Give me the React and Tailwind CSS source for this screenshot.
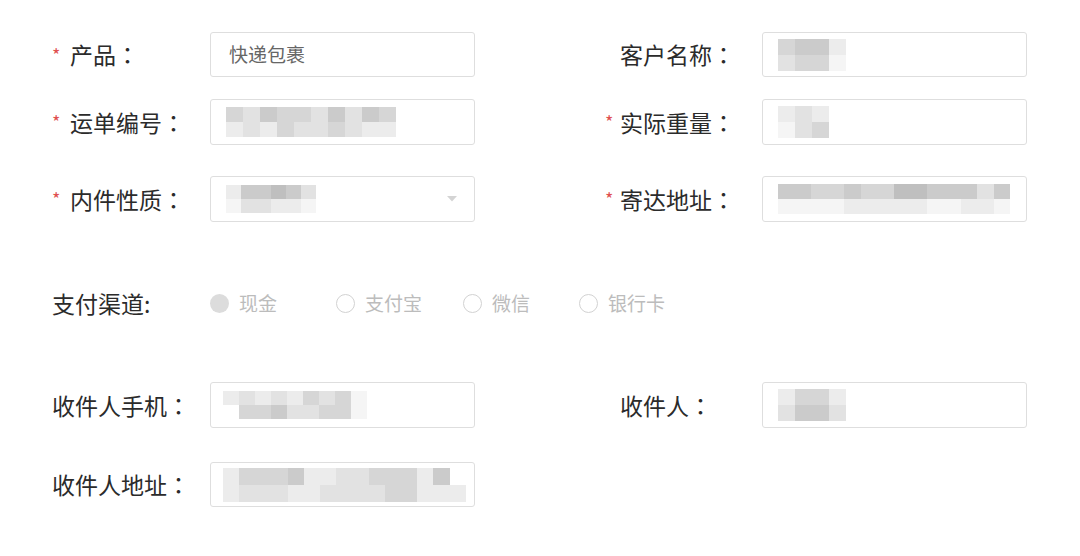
const shade = {
  a: "bg-[#bfbfbf]",
  b: "bg-[#cbcbcb]",
  c: "bg-[#d6d6d6]",
  d: "bg-[#e2e2e2]",
  e: "bg-[#ececec]",
  f: "bg-[#f5f5f5]",
  ".": "bg-transparent",
};

// pixelated (masked) value inside an input
function Masked({ rows, cw = "w-[17px]", ch = "h-[16px]" }) {
  return (
    <div className="flex flex-col blur-[0.6px]">
      {rows.map((r, i) => (
        <div key={i} className="flex">
          {[...r].map((c, j) => (
            <div key={j} className={`${cw} ${ch} ${shade[c]}`} />
          ))}
        </div>
      ))}
    </div>
  );
}

function Label({ text, required, side = "left" }) {
  const w = side === "left" ? "w-[158px]" : "w-[157px]";
  const star = side === "left" ? "w-[18px]" : "w-[15px]";
  return (
    <div className={`${w} shrink-0 flex items-center text-[23px] text-[#2b2b2b]`}>
      {required ? (
        <span className={`${star} self-start mt-[13px] text-[18px] leading-none text-[#e05050]`}>*</span>
      ) : side === "right" ? (
        <span className={star} />
      ) : null}
      <span>{text}</span>
      <span className="font-['Noto_Sans_CJK_TC']">：</span>
    </div>
  );
}

function Box({ children, select }) {
  return (
    <div className="w-[265px] h-full shrink-0 border border-[#dedede] rounded-[3px] bg-white flex items-center justify-between pl-[15px] pr-[17px]">
      <div className="flex items-center">{children}</div>
      {select && (
        <svg width="10" height="6" viewBox="0 0 10 6">
          <path d="M0 0 L10 0 L5 5.5 Z" fill="#d4d4d4" />
        </svg>
      )}
    </div>
  );
}

function Radio({ label, checked, w }) {
  return (
    <div className={`${w} flex items-center gap-[10px]`}>
      {checked ? (
        <div className="w-[19px] h-[19px] rounded-full bg-[#dcdcdc]" />
      ) : (
        <div className="w-[19px] h-[19px] rounded-full border-[1.5px] border-[#d2d2d2]" />
      )}
      <span className="text-[19px] text-[#bcbcbc]">{label}</span>
    </div>
  );
}

export default function App() {
  return (
    <div
      className="w-[1080px] h-[556px] bg-white pt-[32px] pl-[52px] flex flex-col"
      style={{ fontFamily: '"Noto Sans CJK SC", "Noto Sans", sans-serif' }}
    >
      {/* row 1 */}
      <div className="flex h-[45px]">
        <Label text="产品" required />
        <Box>
          <span className="pl-[3px] text-[19px] text-[#666]">快递包裹</span>
        </Box>
        <div className="w-[130px] shrink-0" />
        <Label text="客户名称" side="right" />
        <Box>
          <Masked rows={["cbbe", "dccf"]} />
        </Box>
      </div>

      {/* row 2 */}
      <div className="flex h-[46px] mt-[22px]">
        <Label text="运单编号" required />
        <Box>
          <Masked rows={["cdbccdbdbc", "edecddcdee"]} ch="h-[15px]" />
        </Box>
        <div className="w-[130px] shrink-0" />
        <Label text="实际重量" required side="right" />
        <Box>
          <Masked rows={["ede", "fdc"]} />
        </Box>
      </div>

      {/* row 3 */}
      <div className="flex h-[46px] mt-[31px]">
        <Label text="内件性质" required />
        <Box select>
          <Masked rows={["ebbabd", "fddeef"]} cw="w-[15px]" ch="h-[14px]" />
        </Box>
        <div className="w-[130px] shrink-0" />
        <Label text="寄达地址" required side="right" />
        <Box>
          <Masked rows={["bbccbccaabbbdb", "ffffeeeeeffeef"]} cw="w-[16.6px]" ch="h-[15px]" />
        </Box>
      </div>

      {/* payment */}
      <div className="flex items-center h-[46px] mt-[58px]">
        <div className="w-[158px] shrink-0 text-[23px] text-[#2b2b2b]">支付渠道:</div>
        <Radio label="现金" checked w="w-[126px]" />
        <Radio label="支付宝" w="w-[127px]" />
        <Radio label="微信" w="w-[116px]" />
        <Radio label="银行卡" />
      </div>

      {/* row 4 */}
      <div className="flex h-[46px] mt-[56px]">
        <Label text="收件人手机" />
        <Box>
          <div className="-ml-[3px]">
            <Masked rows={["ededecdcf", ".ccbddccf"]} cw="w-[16px]" ch="h-[14px]" />
          </div>
        </Box>
        <div className="w-[130px] shrink-0" />
        <Label text="收件人" side="right" />
        <Box>
          <Masked rows={["ecce", "dbbd"]} />
        </Box>
      </div>

      {/* row 5 */}
      <div className="flex h-[45px] mt-[34px]">
        <Label text="收件人地址" />
        <Box>
          <div className="-ml-[3px]">
            <Masked rows={["ecccbeeddccceb", "edddeeddddcceee"]} cw="w-[16.2px]" ch="h-[17px]" />
          </div>
        </Box>
      </div>
    </div>
  );
}
